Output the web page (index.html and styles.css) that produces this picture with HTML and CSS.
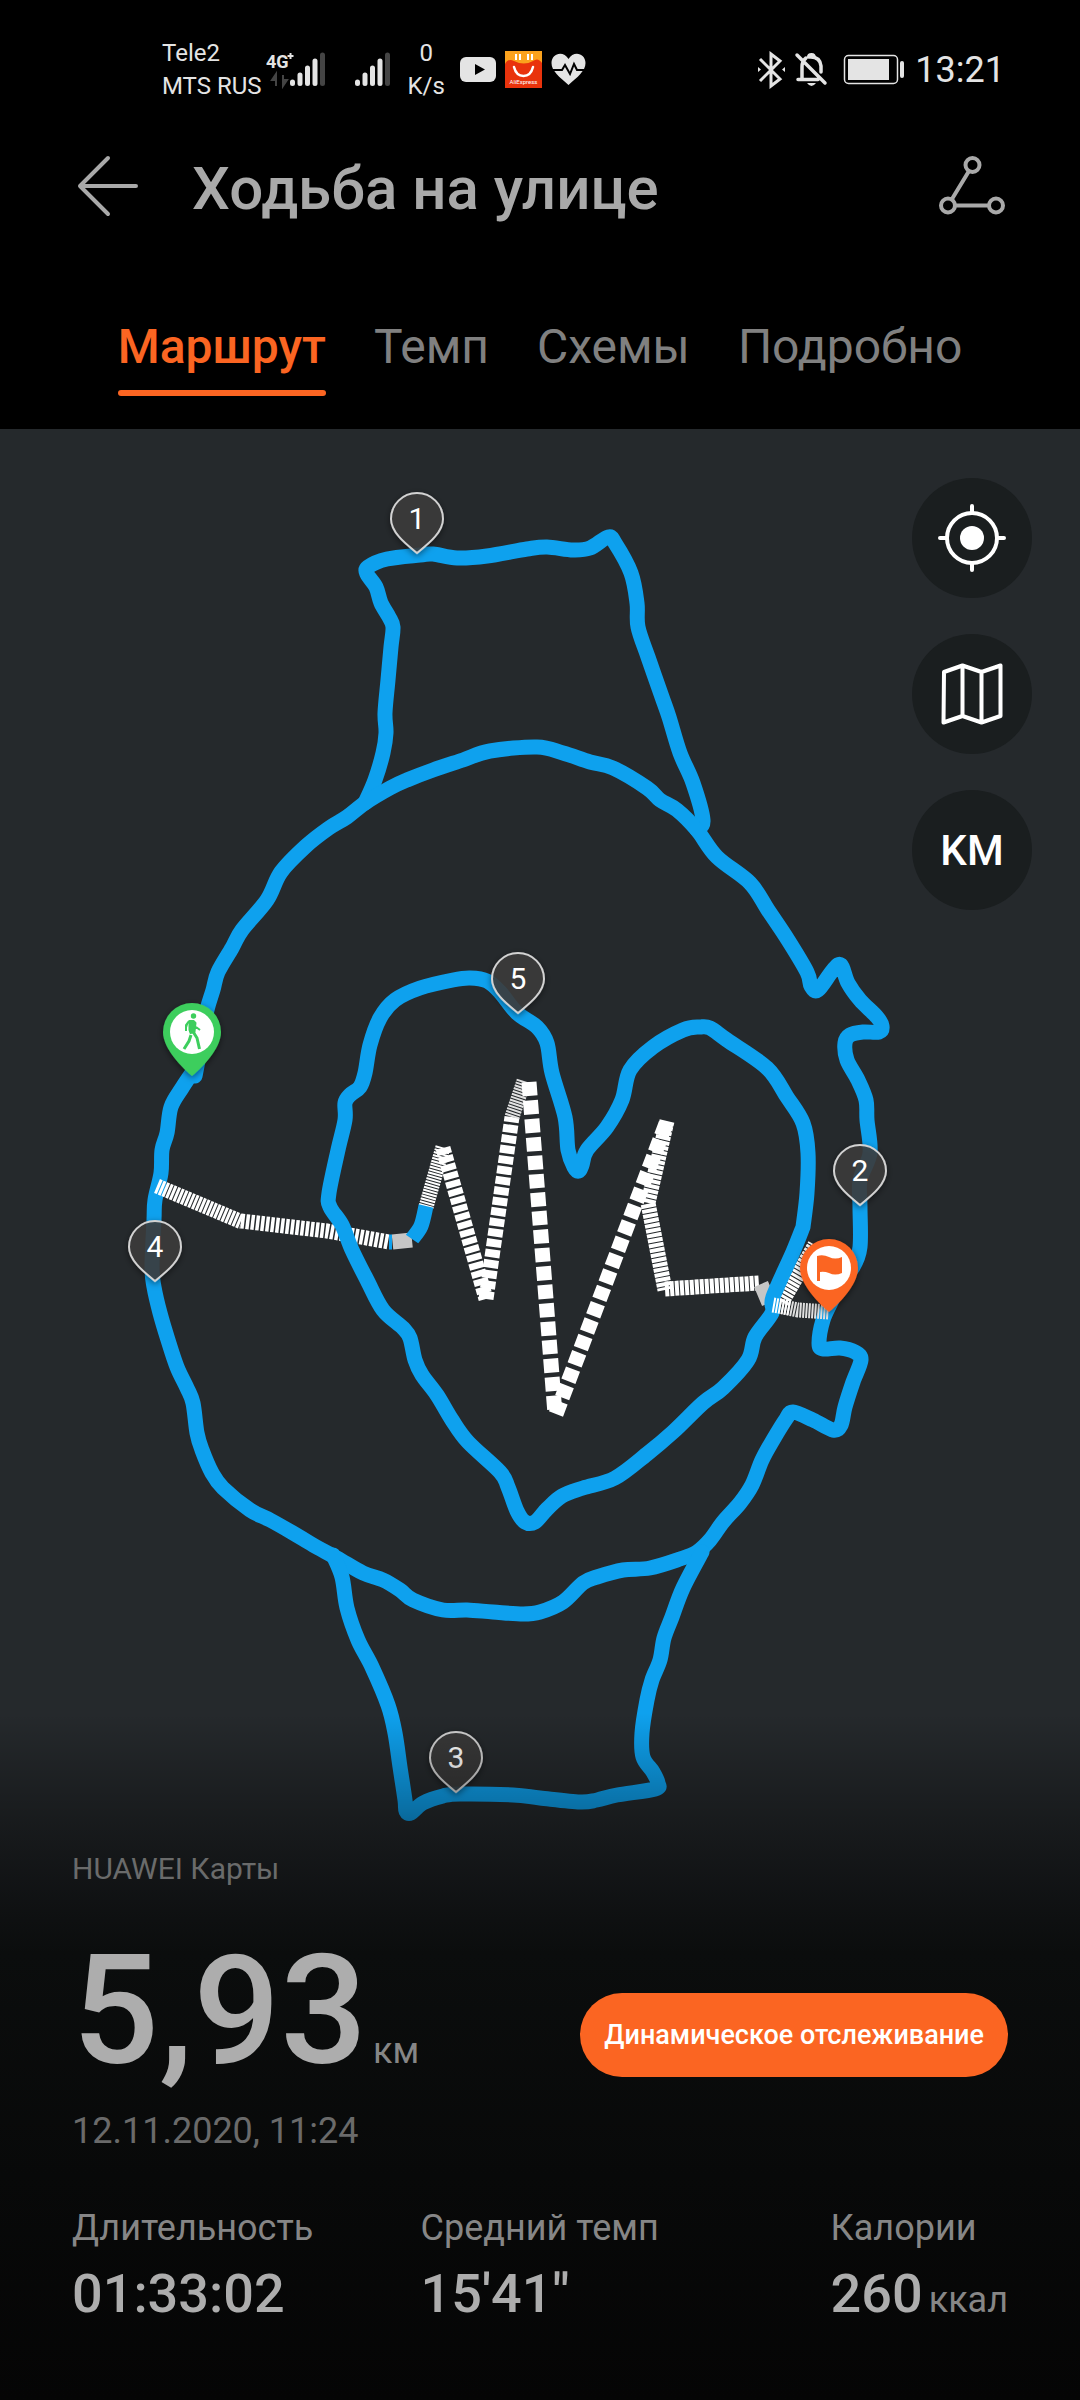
FILE: index.html
```
<!DOCTYPE html>
<html lang="ru">

<head>
    <meta charset="UTF-8">
    <meta name="viewport" content="width=device-width, initial-scale=1.0">
    <title>Ходьба на улице</title>
    <link rel="stylesheet" href="styles.css">
</head>

<body>
    <header class="header">
        <div class="status">
            <div class="carriers">
                <div>Tele2</div>
                <div>MTS RUS</div>
            </div>
            <svg class="signal" width="124" height="38" viewBox="266 49 124 38">
                <text x="266" y="66" class="net">4G</text>
                <path d="M287.500 54h6M290.500 51v6" stroke="#e4e4e4" stroke-width="2" />
                <path d="M276 73v11M276 72l-4 6h4zM283 73v11M283 84l4-6h-4z" fill="#444" stroke="#444" stroke-width="2" />
                <g stroke="#e4e4e4" stroke-width="5" stroke-linecap="round">
                    <path d="M292.500 80v1.500M300 73v8.500M307.500 66v15.500M315 59v22.500" />
                    <path d="M357.500 80v1.500M365 73v8.500M372.500 66v15.500M380 59v22.500" />
                    <path d="M322.500 53v28.500M387.500 53v28.500" stroke="#444" />
                </g>
            </svg>
            <div class="speed">
                <div>0</div>
                <div>K/s</div>
            </div>
            <svg class="apps" width="128" height="38" viewBox="459 50 128 38">
                <rect x="460" y="56" width="36" height="25" rx="6" fill="#e4e4e4" />
                <path d="M475 63v11l10-5.500z" fill="#000" />
                <rect x="505" y="50" width="37" height="37" fill="#e9330c" />
                <path d="M505 50h37v12q-4 -6 -9 -2q-9 5 -19 0q-6 -3 -9 3z" fill="#fba21d" />
                <path d="M516 53v6M520 53v6M528 53v6M532 53v6" stroke="#fff" stroke-width="2" />
                <path d="M514 66c3 12 16 12 19 0" fill="none" stroke="#fff" stroke-width="2.500" stroke-linecap="round" />
                <text x="523.500" y="83" class="ali">AliExpress</text>
                <path d="M568.500 84c-9-8-17-14-17-22 0-10 12-13 17-4 5-9 17-6 17 4 0 8-8 14-17 22z" fill="#e4e4e4" />
                <path d="M550 69h12l3-5 5 9 4-10 3 6h10" fill="none" stroke="#000" stroke-width="2" />
            </svg>
            <svg class="system" width="147" height="38" viewBox="759 50 147 38">
                <g fill="none" stroke="#e4e4e4" stroke-width="3">
                    <path d="M761 58l20 20-9 7V53l9 7-20 20" />
                    <path d="M803 77V66q0-6 4-9M810 56q11-1 12 9v6M799 78.500h20M798 54l28 28" stroke-width="3.500" stroke-linecap="round" />
                    <rect x="845.500" y="54.500" width="53" height="28" rx="4" stroke-width="1.500" />
                </g>
                <path d="M759 66l3 2.500-3 2.500zM786 66l-3 2.500 3 2.500zM808 56q0-4 4.500-4t4.500 5zM808 82h9q-4.500 6-9 0z" fill="#e4e4e4" />
                <rect x="849" y="58" width="41" height="21" fill="#e4e4e4" />
                <rect x="901" y="60" width="4" height="17" rx="2" fill="#e4e4e4" />
            </svg>
            <time class="clock">13:21</time>
        </div>
        <div class="titlebar">
            <button class="icon-btn" aria-label="Назад">
                <svg width="62" height="62" viewBox="77 155 62 62" fill="none" stroke="#a9a9a9" stroke-width="4" stroke-linecap="round" stroke-linejoin="round">
                    <path d="M108 158L80 186l28 28M80 186h56" />
                </svg>
            </button>
            <h1 class="title">Ходьба на улице</h1>
            <button class="icon-btn" aria-label="Поделиться">
                <svg width="68" height="62" viewBox="938 155 68 62" fill="none" stroke="#a9a9a9" stroke-width="4">
                    <circle cx="972.500" cy="165" r="7" />
                    <circle cx="948" cy="205.500" r="7" />
                    <circle cx="996" cy="205.500" r="7" />
                    <path d="M969 171l-17 28M955 205.500h34" />
                </svg>
            </button>
        </div>
        <nav class="tabs">
            <a href="#" class="tab active">Маршрут</a>
            <a href="#" class="tab">Темп</a>
            <a href="#" class="tab">Схемы</a>
            <a href="#" class="tab">Подробно</a>
        </nav>
    </header>

    <main class="map">
        <svg class="route" viewBox="0 429 1080 1400">
            <defs>
                <path id="pin" d="M0 34C-7 28-26 15-26 0A26 26 0 0 1 26 0C26 15 7 28 0 34z" />
                <path id="flagpin" d="M0 44C-7 38-29 18-29 0A29 29 0 0 1 29 0C29 18 7 38 0 44z" />
                <filter id="shadow" x="-30%" y="-30%" width="160%" height="160%">
                    <feDropShadow dx="0" dy="2" stdDeviation="3" flood-color="#000" flood-opacity=".5" />
                </filter>
            </defs>

            <!-- watch case and straps -->
            <path class="line" data-points="365,803 375,780 383,753 386,733 385,713 388,680 391,647 393,627 389,617 381,603 376,587 367,574 368,567 387,559 420,555 433,554 457,558 487,556 527,549 547,547 573,550 590,548 608,537 615,543 631,573 637,603 638,627 648,657 662,697 669,717 680,753 693,783 703,820 697,830" />
            <path class="line" data-points="192,1073 182,1088 171,1107 167,1133 162,1150 161,1173 155,1200 154,1220 152,1267 154,1287 160,1313 168,1340 177,1367 187,1388 193,1403 197,1433 202,1450 212,1473 223,1488 250,1510 270,1520 293,1533 313,1545 337,1558 363,1573 383,1580 400,1590 413,1600 443,1610 467,1610 493,1612 523,1614 540,1612 563,1602 583,1583 597,1577 623,1570 650,1568 680,1559 697,1552 710,1540 723,1522 740,1503 752,1485 762,1460 773,1440 786,1419 793,1412 813,1420 833,1430 841,1425 845,1407 853,1382 861,1360 855,1352 840,1348 823,1349 819,1343 823,1320 832,1300 840,1280 853,1267 860,1247 860,1207 860,1180 870,1153 867,1120 866,1100 858,1080 847,1060 845,1043 850,1035 863,1032 879,1032 882,1026 877,1017 860,1000 848,983 841,965 833,970 818,990 811,986 807,972 788,940 768,910 750,883 717,857 697,830 677,810 660,800 647,788 613,768 590,762 563,753 537,747 490,751 463,760 433,770 407,780 390,788 365,803 347,817 329,828 306,846 281,872 267,900 242,930 232,948 218,972 213,990 207,1010 202,1040 195,1076" />
            <path class="line" data-points="333,1555 342,1577 347,1608 358,1640 372,1667 388,1705 395,1733 400,1767 405,1800 406,1811 411,1813 423,1803 443,1796 460,1794 513,1795 540,1798 580,1802 597,1800 617,1795 655,1789 658,1783 653,1772 643,1757 642,1733 647,1700 652,1680 660,1660 664,1638 672,1617 683,1588 702,1552" />

            <!-- fast segments -->
            <g class="fast">
                <path d="M157 1186L242 1222" stroke-dasharray="3 1" />
                <path d="M241 1221L327 1231L389 1242" stroke-dasharray="3.500 1.500" />
                <path d="M426 1207L443 1147" stroke-dasharray="2 1" />
                <path d="M443 1148L486 1299" stroke-dasharray="6.500 2" />
                <path d="M486 1299L512 1117" stroke-dasharray="8 2.500" />
                <path d="M512 1117L524 1081" stroke-dasharray="2 1" stroke="#e0e0e0" />
                <path d="M529 1082L555 1414" stroke-dasharray="14 4.500" />
                <path d="M556 1414L667 1121" stroke-dasharray="13 4.500" />
                <path d="M667 1121L648 1203L665 1290" stroke-dasharray="4 1" />
                <path d="M665 1289L759 1283" stroke-dasharray="4 1" />
                <path d="M782 1302L815 1245" stroke-dasharray="3 1" />
                <path d="M773 1305L798 1310L829 1312" stroke-dasharray="2 1" stroke="#e0e0e0" />
                <path d="M392.500 1242L412 1240M761 1284L769 1303" stroke="#c6c6c6" />
            </g>
            <path class="line flat" data-points="412,1239 421,1226 426,1206" />
            <path class="line flat" data-points="389,1242 392,1242" />

            <!-- heart -->
            <path class="line" data-points="803,1227 793,1252 773,1297 772,1313 755,1337 748,1360 723,1388 703,1403 673,1432 647,1454 615,1478 583,1488 562,1496 547,1509 535,1522 525,1522 517,1511 508,1487 500,1472 468,1442 452,1420 437,1395 422,1375 415,1360 410,1338 403,1328 383,1310 367,1280 352,1250 342,1225 330,1207 329,1193 338,1150 345,1120 345,1103 350,1095 360,1087 365,1073 370,1045 380,1018 395,1000 420,988 453,980 470,978 487,981 500,992 517,1013 537,1027 547,1043 552,1073 565,1117 568,1150 574,1167 579,1171 582,1165 587,1150 607,1127 622,1100 630,1070 653,1047 683,1030 700,1027 710,1028 727,1040 767,1068 787,1097 803,1123 808,1153 807,1193 803,1227" />
            <path class="fast" d="M773 1305L790 1308" stroke-dasharray="2 1" />

            <!-- kilometre marks -->
            <g class="mark" transform="translate(417 519)"><use href="#pin" /><text y="10">1</text></g>
            <g class="mark" transform="translate(860 1171)"><use href="#pin" /><text y="10">2</text></g>
            <g class="mark" transform="translate(456 1758)"><use href="#pin" /><text y="10">3</text></g>
            <g class="mark" transform="translate(155 1247)"><use href="#pin" /><text y="10">4</text></g>
            <g class="mark" transform="translate(518 979)"><use href="#pin" /><text y="10">5</text></g>

            <!-- start and finish -->
            <g transform="translate(192 1032)">
                <use href="#flagpin" fill="#3dce5d" filter="url(#shadow)" />
                <circle r="22" fill="#fff" />
                <circle cx="1.500" cy="-16" r="2.700" fill="#3dce5d" />
                <path d="M-2.500-11h4l2 2-1 9-4 1-1-3zM-3-11l-3 4v6M4-5l4 3" fill="#3dce5d" stroke="#3dce5d" stroke-width="2" stroke-linejoin="round" />
                <path d="M0-2l5 8 2.500 11M-1 3l-2 6-5 8" fill="none" stroke="#3dce5d" stroke-width="3" />
            </g>
            <g transform="translate(829 1268)">
                <use href="#flagpin" fill="#fb6522" filter="url(#shadow)" />
                <circle r="22" fill="#fff" />
                <path d="M-12-12q6-2 12 1 6 3 13 0V5q-7 3-13 0-5-2-9-1v9h-3z" fill="#fb6522" />
            </g>
        </svg>

        <div class="controls">
            <button class="round-btn" aria-label="Моё местоположение">
                <svg width="68" height="68" viewBox="-34 -34 68 68" fill="none" stroke="#fff" stroke-width="4" stroke-linecap="round">
                    <circle r="25" />
                    <circle r="12" fill="#fff" stroke="none" />
                    <path d="M0-32v6M0 26v6M-32 0h6M26 0h6" />
                </svg>
            </button>
            <button class="round-btn" aria-label="Тип карты">
                <svg width="64" height="64" viewBox="-32 -32 64 64" fill="none" stroke="#fff" stroke-width="4" stroke-linejoin="round">
                    <path d="M-28-22L-9.500-28.500 9.500-22 28.500-28.500V22L9.500 28.500-9.500 22-28.500 28.500zM-9.500-28V22M9.500-22V28" />
                </svg>
            </button>
            <button class="round-btn">KM</button>
        </div>

        <section class="summary">
            <div class="source">HUAWEI Карты</div>
            <div class="total">
                <div class="distance">5,93<span class="unit">км</span></div>
                <button class="track-btn">Динамическое отслеживание</button>
            </div>
            <time class="date">12.11.2020, 11:24</time>
            <div class="stats">
                <div>
                    <div class="label">Длительность</div>
                    <div class="value">01:33:02</div>
                </div>
                <div>
                    <div class="label">Средний темп</div>
                    <div class="value">15'41"</div>
                </div>
                <div>
                    <div class="label">Калории</div>
                    <div class="value">260<span class="unit">ккал</span></div>
                </div>
            </div>
        </section>
    </main>

    <script src="route.js"></script>
</body>

</html>
```

FILE: styles.css
```
* {
    box-sizing: border-box;
}

body {
    margin: 0;
    min-height: 100vh;
    display: flex;
    flex-direction: column;
    background-color: #000;
    font-family: Roboto, "Noto Sans", sans-serif;
}

button {
    border: 0;
    padding: 0;
    background: none;
    font-family: inherit;
}

svg {
    display: block;
}

.header {
    padding-bottom: 33px;
    color: #a9a9a9;
}

.status {
    display: flex;
    align-items: center;
    padding: 37px 75px 0 162px;
    height: 103px;
    font-size: 24px;
    line-height: 33px;
    color: #e4e4e4;
}

.signal {
    margin-left: 4px;
}

.net {
    font-size: 18px;
    font-weight: 700;
    fill: #e4e4e4;
}

.speed {
    margin-left: 18px;
    text-align: center;
}

.apps {
    margin-left: 14px;
}

.ali {
    font-size: 6px;
    fill: #fff;
    text-anchor: middle;
}

.system {
    margin-left: auto;
}

.clock {
    margin-left: 10px;
    font-size: 36px;
}

.titlebar {
    display: flex;
    align-items: center;
    height: 166px;
    padding: 0 74px 0 77px;
}

.title {
    flex: 1;
    margin: 0 0 0 53px;
    padding-top: 6px;
    font-size: 60px;
    font-weight: 500;
    line-height: 72px;
}

.tabs {
    display: flex;
    justify-content: center;
    gap: 48px;
    padding-top: 50px;
}

.tab {
    position: relative;
    padding-bottom: 21px;
    font-size: 48px;
    line-height: 56px;
    color: #808080;
    text-decoration: none;
}

.tab.active {
    color: #fb6522;
    font-weight: 500;
}

.tab.active::after {
    content: "";
    position: absolute;
    left: 0;
    right: 0;
    bottom: 0;
    height: 6px;
    border-radius: 3px;
    background-color: #fb6522;
}

.map {
    flex: 1;
    position: relative;
    display: flex;
    flex-direction: column;
    background-color: #25292c;
}

.route {
    position: absolute;
    top: 0;
    left: 0;
    width: 100%;
}

.line {
    fill: none;
    stroke: #0ea1ee;
    stroke-width: 15px;
    stroke-linejoin: round;
    stroke-linecap: round;
}

.line.flat {
    stroke-linecap: butt;
}

.fast {
    fill: none;
    stroke: #fff;
    stroke-width: 15px;
}

.mark use {
    fill: rgba(60, 60, 60, 0.85);
    stroke: #d2d2d2;
    stroke-width: 2px;
    filter: url(#shadow);
}

.mark text {
    font-size: 30px;
    fill: #fff;
    text-anchor: middle;
}

.controls {
    position: relative;
    display: flex;
    flex-direction: column;
    align-items: flex-end;
    gap: 36px;
    padding: 49px 48px 0;
}

.round-btn {
    display: flex;
    align-items: center;
    justify-content: center;
    width: 120px;
    height: 120px;
    border-radius: 50%;
    background-color: #1a1e1f;
    color: #fff;
    font-size: 42px;
    font-weight: 500;
}

.summary {
    position: relative;
    margin-top: auto;
    padding: 138px 72px 74px;
    background: linear-gradient(rgba(0, 0, 0, 0) 0, rgba(0, 0, 0, 0.32) 100px, rgba(8, 9, 10, 0.7) 180px, #0b0d0d 240px, #050505 100%);
    color: #adadad;
}

.source {
    font-size: 30px;
    line-height: 36px;
    color: #6a6b6b;
}

.total {
    display: flex;
    align-items: center;
    justify-content: space-between;
    margin-top: 65px;
}

.distance {
    display: flex;
    align-items: baseline;
    gap: 6px;
    margin-bottom: 37px;
    font-size: 153px;
    font-weight: 500;
    line-height: 118px;
}

.unit {
    font-size: 36px;
    font-weight: 400;
    line-height: 44px;
    color: #868686;
}

.value .unit {
    margin-left: 6px;
}

.track-btn {
    height: 84px;
    margin-top: 7px;
    padding: 0 24px;
    border-radius: 42px;
    background-color: #fb6522;
    color: #fff;
    font-size: 27px;
    font-weight: 500;
}

.date {
    display: block;
    font-size: 36px;
    line-height: 42px;
    color: #6a6a6a;
}

.stats {
    display: grid;
    grid-template-columns: 17fr 20fr auto;
    margin-top: 54px;
}

.label {
    font-size: 36px;
    line-height: 44px;
    color: #868686;
}

.value {
    margin-top: 12px;
    font-size: 54px;
    font-weight: 500;
    line-height: 64px;
}
```

FILE: route.js
```
// turns the list of track points into a smooth curve
document.querySelectorAll('.line').forEach(line => {
    const pts = line.dataset.points.split(' ').map(p => p.split(',').map(Number));
    let d = `M${pts[0]}`;
    for (let i = 0; i < pts.length - 1; i++) {
        const a = pts[i - 1] || pts[i];
        const b = pts[i];
        const c = pts[i + 1];
        const e = pts[i + 2] || c;
        d += `C${b[0] + (c[0] - a[0]) / 6},${b[1] + (c[1] - a[1]) / 6} ${c[0] - (e[0] - b[0]) / 6},${c[1] - (e[1] - b[1]) / 6} ${c}`;
    }
    line.setAttribute('d', d);
});
```
